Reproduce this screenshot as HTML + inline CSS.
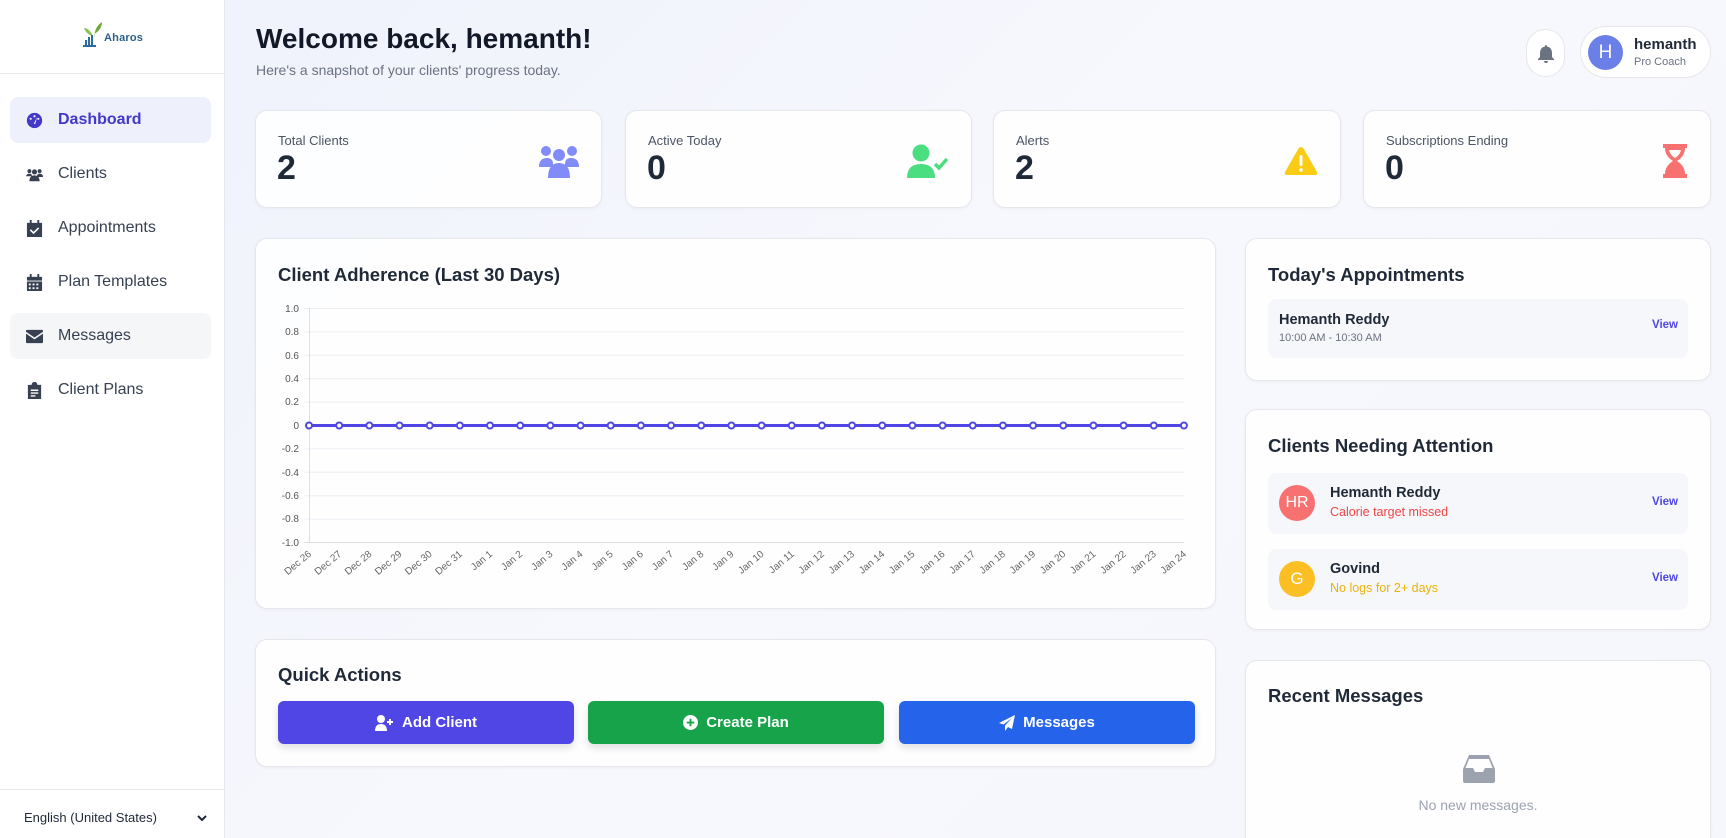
<!DOCTYPE html>
<html style="overflow:hidden;height:838px"><head><meta charset="utf-8"><style>
*{box-sizing:border-box;margin:0;padding:0}
html,body{width:1726px;height:838px;overflow:hidden}
body{font-family:"Liberation Sans",sans-serif;background:linear-gradient(135deg,#eef1fc 0%,#f7f8fd 50%,#f6f6fd 100%);position:relative;color:#1f2937}
.sb{position:absolute;left:0;top:0;width:225px;height:838px;background:#fff;border-right:1px solid #e5e7eb}
.logo{height:74px;border-bottom:1px solid #e5e7eb;position:relative}
.nav{position:absolute;left:10px;width:201px;height:46px;border-radius:8px;display:flex;align-items:center;padding-left:16px;font-size:16px;color:#374151}
.nav svg{width:17px;height:17px;margin-right:15px;fill:#374151}
.nav.act{background:#eef1fc;color:#4338ca;font-weight:bold}
.nav.act svg{fill:#4338ca}
.card{position:absolute;background:rgba(255,255,255,.85);border:1px solid #e5e7eb;border-radius:12px;box-shadow:0 1px 3px rgba(0,0,0,.04)}
.stat .l{position:absolute;left:22px;top:22px;font-size:13px;color:#4b5563}
.stat .v{position:absolute;left:21px;top:38px;font-size:34px;font-weight:bold;color:#1f2937}
.stat svg{position:absolute;right:22px;top:30px}
.ct{position:absolute;left:22px;font-size:18.5px;font-weight:bold;color:#1f2937}
.item{position:absolute;left:22px;right:22px;background:#f6f7fb;border-radius:8px}
.view{position:absolute;right:10px;font-size:11.5px;font-weight:bold;color:#4f46e5}
.btn{position:absolute;top:61px;height:43px;border-radius:6px;color:#fff;font-weight:bold;font-size:15px;display:flex;align-items:center;justify-content:center;box-shadow:0 4px 8px rgba(0,0,0,.12)}
.btn svg{margin-right:8px;fill:#fff}
</style></head><body>
<div class="sb">
 <div class="logo">
  <svg style="position:absolute;left:82px;top:18px" width="24" height="32" viewBox="0 0 24 32"><path d="M12 22 C12 14 14 8 20 4 C20 10 16 14 12 16Z" fill="#6aaa3a"/><path d="M11 18 C8 12 5 10 2 10 C4 15 7 17 11 18Z" fill="#8cc152"/><rect x="3" y="22" width="2" height="6" fill="#2c6aa0"/><rect x="6" y="19" width="2" height="9" fill="#2c6aa0"/><rect x="9" y="17" width="2" height="11" fill="#2c6aa0"/><path d="M1 28 H14" stroke="#2c6aa0" stroke-width="2"/></svg>
  <span style="position:absolute;left:104px;top:32px;font-size:11px;color:#2c5f8a;font-weight:bold;letter-spacing:.2px">Aharos</span>
 </div>
 <div class="nav act" style="top:97px"><svg viewBox="0 0 20 20"><circle cx="10" cy="10" r="9"/><circle cx="10" cy="5" r="1.3" fill="#eef1fc"/><circle cx="5.5" cy="8" r="1.3" fill="#eef1fc"/><circle cx="14.5" cy="8" r="1.3" fill="#eef1fc"/><path d="M9 14 L13 6 L11 14Z" fill="#eef1fc"/></svg>Dashboard</div>
 <div class="nav" style="top:151px"><svg viewBox="0 0 20 16"><circle cx="4" cy="4" r="2.3"/><circle cx="16" cy="4" r="2.3"/><circle cx="10" cy="5" r="3"/><path d="M0 11 Q0 7 4 7 Q7 7 7 10 H0Z M13 10 Q13 7 16 7 Q20 7 20 11 H13Z M4 16 Q4 9 10 9 Q16 9 16 16Z"/></svg>Clients</div>
 <div class="nav" style="top:205px"><svg viewBox="0 0 16 18"><rect x="3" y="0" width="2" height="4"/><rect x="11" y="0" width="2" height="4"/><path d="M0 3 H16 V18 H0Z M3 11 L7 15 L13 9 L11.8 7.8 L7 12.6 L4.2 9.8Z" fill-rule="evenodd"/></svg>Appointments</div>
 <div class="nav" style="top:259px"><svg viewBox="0 0 16 18"><rect x="3" y="0" width="2" height="4"/><rect x="11" y="0" width="2" height="4"/><path d="M0 3 H16 V7 H0Z"/><path d="M0 8 H16 V18 H0Z M2 10 V12 H4 V10Z M6 10 V12 H8 V10Z M10 10 V12 H12 V10Z M2 14 V16 H4 V14Z M6 14 V16 H8 V14Z M10 14 V16 H12 V14Z" fill-rule="evenodd"/></svg>Plan Templates</div>
 <div class="nav" style="top:313px;background:#f5f6f8"><svg viewBox="0 0 18 14"><path d="M0 1 Q0 0 1 0 H17 Q18 0 18 1 V2 L9 8 L0 2Z M0 4 L9 10 L18 4 V13 Q18 14 17 14 H1 Q0 14 0 13Z"/></svg>Messages</div>
 <div class="nav" style="top:367px"><svg viewBox="0 0 14 18"><path d="M0 3 H4 Q4 0 7 0 Q10 0 10 3 H14 V18 H0Z M3 8 H11 V9.5 H3Z M3 11 H11 V12.5 H3Z M3 14 H8 V15.5 H3Z" fill-rule="evenodd"/></svg>Client Plans</div>
 <div style="position:absolute;left:0;right:0;top:789px;border-top:1px solid #e5e7eb"></div>
 <div style="position:absolute;left:24px;top:810px;font-size:13px;color:#1f2937">English (United States)</div>
 <svg style="position:absolute;left:197px;top:814px" width="10" height="8" viewBox="0 0 10 8"><path d="M1 2 L5 6 L9 2" stroke="#1f2937" stroke-width="2" fill="none"/></svg>
</div>

<div style="position:absolute;left:256px;top:23px;font-size:28px;font-weight:bold;color:#111827">Welcome back, hemanth!</div>
<div style="position:absolute;left:256px;top:62px;font-size:14px;color:#6b7280">Here's a snapshot of your clients' progress today.</div>

<div style="position:absolute;left:1526px;top:29px;width:39px;height:48px;border:1px solid #e5e7eb;border-radius:20px;background:#fff"><svg style="position:absolute;left:11px;top:15px" width="16" height="18" viewBox="0 0 16 18"><path d="M8 0 Q9 0 9 1.5 Q14 2.5 14 8 V12 L16 14 V15 H0 V14 L2 12 V8 Q2 2.5 7 1.5 Q7 0 8 0Z M6 16 H10 Q10 18 8 18 Q6 18 6 16Z" fill="#6b7280"/></svg></div>
<div style="position:absolute;left:1580px;top:26px;width:131px;height:52px;border:1px solid #e5e7eb;border-radius:26px;background:#fff">
 <div style="position:absolute;left:7px;top:8px;width:35px;height:35px;border-radius:50%;background:#6b7fe8;color:#fff;font-size:19px;text-align:center;line-height:35px">H</div>
 <div style="position:absolute;left:53px;top:9px;font-size:15px;font-weight:bold;color:#1f2937">hemanth</div>
 <div style="position:absolute;left:53px;top:29px;font-size:11px;color:#6b7280">Pro Coach</div>
</div>

<div class="card stat" style="left:255px;top:110px;width:347px;height:98px"><div class="l">Total Clients</div><div class="v">2</div>
<svg width="40" height="34" viewBox="0 0 40 34" style="top:34px"><circle cx="7" cy="6" r="5" fill="#818cf8"/><circle cx="33" cy="6" r="5" fill="#818cf8"/><circle cx="20" cy="10" r="6" fill="#818cf8"/><path d="M0 22 Q0 13 8 13 Q14 13 14 19 V22Z M26 19 Q26 13 32 13 Q40 13 40 22 H26Z M9 33 Q9 18 20 18 Q31 18 31 33Z" fill="#818cf8"/></svg></div>
<div class="card stat" style="left:625px;top:110px;width:347px;height:98px"><div class="l">Active Today</div><div class="v">0</div>
<svg width="42" height="34" viewBox="0 0 42 34" style="top:33px"><circle cx="14" cy="9" r="8.5" fill="#4ade80"/><path d="M0 34 Q0 20 14 20 Q28 20 28 34Z" fill="#4ade80"/><path d="M28 20 L32 24 L40 15" stroke="#4ade80" stroke-width="3.5" fill="none"/></svg></div>
<div class="card stat" style="left:993px;top:110px;width:348px;height:98px"><div class="l">Alerts</div><div class="v">2</div>
<svg width="34" height="30" viewBox="0 0 34 30" style="top:35px"><path d="M17 1 Q18.5 1 19.5 2.5 L33 26 Q34 29 31 29 H3 Q0 29 1 26 L14.5 2.5 Q15.5 1 17 1Z" fill="#facc15"/><rect x="15.5" y="9" width="3" height="11" rx="1.5" fill="#fff"/><circle cx="17" cy="24" r="1.8" fill="#fff"/></svg></div>
<div class="card stat" style="left:1363px;top:110px;width:348px;height:98px"><div class="l">Subscriptions Ending</div><div class="v">0</div>
<svg width="26" height="34" viewBox="0 0 26 34" style="top:33px"><path d="M1 0 H25 V4 H23 Q23 12 15 17 Q23 22 23 30 H25 V34 H1 V30 H3 Q3 22 11 17 Q3 12 3 4 H1Z M7 6 Q8 11 13 14 Q18 11 19 6Z" fill="#f87171" fill-rule="evenodd"/></svg></div>

<div class="card" style="left:255px;top:238px;width:961px;height:371px"><div class="ct" style="top:25px">Client Adherence (Last 30 Days)</div></div>
<svg style="position:absolute;left:0;top:0" width="1726" height="838">
<g font-family="Liberation Sans" font-size="10" fill="#555" text-anchor="end">
<g stroke="#eceef2" stroke-width="1">
<line x1="304" y1="308.5" x2="1184" y2="308.5"/><line x1="304" y1="331.9" x2="1184" y2="331.9"/><line x1="304" y1="355.3" x2="1184" y2="355.3"/><line x1="304" y1="378.7" x2="1184" y2="378.7"/><line x1="304" y1="402.1" x2="1184" y2="402.1"/><line x1="304" y1="425.5" x2="1184" y2="425.5"/><line x1="304" y1="448.9" x2="1184" y2="448.9"/><line x1="304" y1="472.3" x2="1184" y2="472.3"/><line x1="304" y1="495.7" x2="1184" y2="495.7"/><line x1="304" y1="519.1" x2="1184" y2="519.1"/>
</g>
<line x1="304" y1="542.5" x2="1184" y2="542.5" stroke="#dcdfe4"/>
<line x1="309.5" y1="308" x2="309.5" y2="543" stroke="#dcdfe4"/>
<text x="299" y="312">1.0</text><text x="299" y="335">0.8</text><text x="299" y="359">0.6</text><text x="299" y="382">0.4</text><text x="299" y="405">0.2</text><text x="299" y="429">0</text><text x="299" y="452">-0.2</text><text x="299" y="476">-0.4</text><text x="299" y="499">-0.6</text><text x="299" y="522">-0.8</text><text x="299" y="546">-1.0</text>
</g>
<line x1="309" y1="425.5" x2="1184" y2="425.5" stroke="#4f46e5" stroke-width="3"/>
<g fill="#fff" stroke="#4f46e5" stroke-width="2" id="pts"></g>
<g id="lbls" font-family="Liberation Sans" font-size="10" fill="#666" text-anchor="end"></g>
</svg>
<script>
var m=["Dec 26","Dec 27","Dec 28","Dec 29","Dec 30","Dec 31"];for(var i=1;i<=24;i++)m.push("Jan "+i);
var p="",l="";for(var i=0;i<30;i++){var x=309+i*30.17;p+='<circle cx="'+x+'" cy="425.5" r="3"/>';l+='<text transform="translate('+(x+3)+',555) rotate(-40)">'+m[i]+'</text>';}
document.getElementById("pts").innerHTML=p;document.getElementById("lbls").innerHTML=l;
</script>

<div class="card" style="left:255px;top:639px;width:961px;height:128px"><div class="ct" style="top:24px">Quick Actions</div>
<div class="btn" style="left:22px;width:296px;background:#4f46e5"><svg width="19" height="16" viewBox="0 0 19 16"><circle cx="6" cy="4" r="4"/><path d="M0 16 Q0 9 6 9 Q12 9 12 16Z M14 4 H16 V6 H18 V8 H16 V10 H14 V8 H12 V6 H14Z"/></svg>Add Client</div>
<div class="btn" style="left:332px;width:296px;background:#16a34a"><svg width="15" height="15" viewBox="0 0 16 16"><path d="M8 0 A8 8 0 1 1 8 16 A8 8 0 1 1 8 0Z M7 4 V7 H4 V9 H7 V12 H9 V9 H12 V7 H9 V4Z" fill-rule="evenodd"/></svg>Create Plan</div>
<div class="btn" style="left:643px;width:296px;background:#2563eb"><svg width="16" height="16" viewBox="0 0 16 16"><path d="M16 0 L0 8 L4.5 9.5 L13 3 L6 10.5 V16 L9 12 L13 14Z"/></svg>Messages</div>
</div>

<div class="card" style="left:1245px;top:238px;width:466px;height:143px"><div class="ct" style="top:25px">Today's Appointments</div>
<div class="item" style="top:60px;height:59px"><div style="position:absolute;left:11px;top:13px;font-size:14.5px;font-weight:bold;color:#1f2937">Hemanth Reddy</div><div style="position:absolute;left:11px;top:33px;font-size:11px;color:#6b7280">10:00 AM - 10:30 AM</div><div class="view" style="top:20px">View</div></div>
</div>

<div class="card" style="left:1245px;top:409px;width:466px;height:221px"><div class="ct" style="top:25px">Clients Needing Attention</div>
<div class="item" style="top:63px;height:61px"><div style="position:absolute;left:11px;top:12px;width:36px;height:36px;border-radius:50%;background:#f87171;color:#fff;font-size:16px;text-align:center;line-height:36px">HR</div><div style="position:absolute;left:62px;top:12px;font-size:14.5px;font-weight:bold;color:#1f2937">Hemanth Reddy</div><div style="position:absolute;left:62px;top:32px;font-size:12.5px;color:#ef4444">Calorie target missed</div><div class="view" style="top:23px">View</div></div>
<div class="item" style="top:139px;height:61px"><div style="position:absolute;left:11px;top:12px;width:36px;height:36px;border-radius:50%;background:#fbbf24;color:#fff;font-size:17px;text-align:center;line-height:36px">G</div><div style="position:absolute;left:62px;top:12px;font-size:14.5px;font-weight:bold;color:#1f2937">Govind</div><div style="position:absolute;left:62px;top:32px;font-size:12.5px;color:#eab308">No logs for 2+ days</div><div class="view" style="top:23px">View</div></div>
</div>

<div class="card" style="left:1245px;top:660px;width:466px;height:178px;border-bottom:none;border-radius:12px 12px 0 0"><div class="ct" style="top:24px">Recent Messages</div>
<svg style="position:absolute;left:217px;top:94px" width="32" height="28" viewBox="0 0 32 28"><path d="M6 0 H26 L32 14 V26 Q32 28 30 28 H2 Q0 28 0 26 V14Z M6 4 L2.5 13 H10 L12 17 H20 L22 13 H29.5 L26 4Z" fill="#9ca3af" fill-rule="evenodd"/></svg>
<div style="position:absolute;left:0;right:0;top:136px;text-align:center;font-size:14px;color:#9ca3af">No new messages.</div>
</div>
</body></html>
